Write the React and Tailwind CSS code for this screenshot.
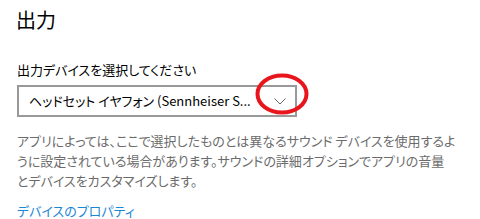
export default function App() {
  const font = { fontFamily: '"Noto Sans CJK JP", "Noto Sans", sans-serif', fontFeatureSettings: '"palt"' };
  return (
    <div className="w-[480px] h-[219px] bg-white overflow-hidden pl-[17px]" style={font}>
      <div className="pt-[6px] text-[20px] leading-[28px] text-black -ml-[1px]">出力</div>
      <div className="mt-[26px] text-[13px] leading-[20px] text-black">出力デバイスを選択してください</div>
      <div className="relative mt-[5px] w-[280px]">
        <div className="h-[32px] border-2 border-[#999999] flex items-center pl-[10px] pr-[8px] text-[13px] text-black">
          <span className="flex-1 whitespace-nowrap">ヘッドセット イヤフォン (Sennheiser S...</span>
          <svg width="12" height="7" viewBox="0 0 12 7" className="mr-[1px]">
            <path d="M0.5 0.5 L6 6 L11.5 0.5" fill="none" stroke="#666" strokeWidth="1" />
          </svg>
        </div>
        <svg className="absolute left-[238px] top-[-12px]" width="54" height="42" viewBox="0 0 54 42">
          <ellipse cx="27" cy="21" rx="24.5" ry="18.5" fill="none" stroke="#e8161c" strokeWidth="4" />
        </svg>
      </div>
      <div className="mt-[14px] text-[13px] leading-[20px] text-[#6b6b6b] whitespace-nowrap">
        アプリによっては、ここで選択したものとは異なるサウンド デバイスを使用するよ<br />
        うに設定されている場合があります。サウンドの詳細オプションでアプリの音量<br />
        とデバイスをカスタマイズします。
      </div>
      <div className="mt-[10px] text-[13px] leading-[20px] text-[#1a86d6]">デバイスのプロパティ</div>
    </div>
  );
}
